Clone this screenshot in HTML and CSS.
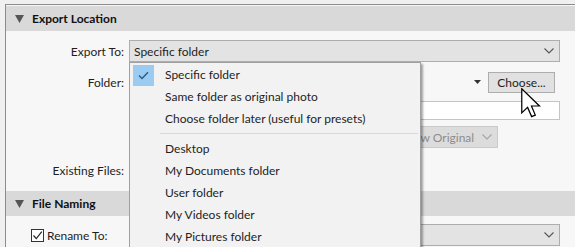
FILE: index.html
```html
<!DOCTYPE html>
<html lang="en">
<head>
    <meta charset="UTF-8">
    <title>Export Location</title>
    <link rel="stylesheet" href="styles.css">
</head>
<body>
    <div class="dialog">
        <div class="panel">
            <div class="section-head">
                <svg class="tri" width="9" height="8" viewBox="0 0 9 8"><path d="M0 0H9L4.5 8Z" fill="#555"/></svg>
                Export Location
            </div>
            <div class="section-body">
                <div class="row row-first">
                    <span class="lbl">Export To:</span>
                    <div class="select">
                        <span>Specific folder</span>
                        <svg class="chev" width="10" height="6" viewBox="0 0 10 6"><path d="M0.5 0.5L5 5L9.5 0.5" fill="none" stroke="#555" stroke-width="1.1"/></svg>
                    </div>
                </div>
                <div class="row row-folder">
                    <span class="lbl">Folder:</span>
                    <div class="folder-path"></div>
                    <svg class="small-tri" width="7" height="4" viewBox="0 0 7 4"><path d="M0 0H7L3.5 4Z" fill="#333"/></svg>
                    <button class="btn">Choose...</button>
                </div>
                <div class="row row-sub">
                    <span class="lbl"></span>
                    <div class="field"></div>
                </div>
                <div class="row row-stack">
                    <span class="lbl"></span>
                    <div class="spacer"></div>
                    <div class="select disabled">
                        <span>Below Original</span>
                        <svg class="chev" width="10" height="6" viewBox="0 0 10 6"><path d="M0.5 0.5L5 5L9.5 0.5" fill="none" stroke="#a5a5a5" stroke-width="1.1"/></svg>
                    </div>
                </div>
                <div class="row row-existing">
                    <span class="lbl">Existing Files:</span>
                </div>
            </div>
            <div class="section-head head-naming">
                <svg class="tri" width="9" height="8" viewBox="0 0 9 8"><path d="M0 0H9L4.5 8Z" fill="#555"/></svg>
                File Naming
            </div>
            <div class="section-body">
                <div class="row row-rename">
                    <span class="check-lbl">
                        <span class="checkbox">
                            <svg width="11" height="11" viewBox="0 0 11 11"><path d="M1.5 5.5L4.3 8.6L9.8 1.6" fill="none" stroke="#222" stroke-width="1.2"/></svg>
                        </span>
                        Rename To:
                    </span>
                    <div class="select">
                        <span></span>
                        <svg class="chev" width="10" height="6" viewBox="0 0 10 6"><path d="M0.5 0.5L5 5L9.5 0.5" fill="none" stroke="#555" stroke-width="1.1"/></svg>
                    </div>
                </div>
            </div>
        </div>

        <!-- open dropdown of Export To -->
        <ul class="menu">
            <li class="checked">
                <span class="tick">
                    <svg width="11" height="9" viewBox="0 0 11 9"><path d="M1 4.6L4 7.6L10 1.2" fill="none" stroke="#2b5a8a" stroke-width="1.4"/></svg>
                </span>
                Specific folder
            </li>
            <li>Same folder as original photo</li>
            <li>Choose folder later (useful for presets)</li>
            <li class="sep"></li>
            <li>Desktop</li>
            <li>My Documents folder</li>
            <li>User folder</li>
            <li>My Videos folder</li>
            <li>My Pictures folder</li>
        </ul>

        <svg class="cursor" width="20" height="30" viewBox="0 0 13 19.5">
            <path d="M0.5 0.5V16.2L4.3 12.6L6.9 18.6L9.3 17.6L6.8 11.7H12Z" fill="#fff" stroke="#000" stroke-width="0.8" stroke-linejoin="miter"/>
        </svg>
    </div>
</body>
</html>
```

FILE: styles.css
```css
body {
    margin: 0;
    background-color: #f0f0f0;
    font-family: Lato, "Noto Sans", sans-serif;
    font-size: 12px;
    color: #1e1e1e;
}

.dialog {
    position: relative;
    width: 575px;
    height: 247px;
    overflow: hidden;
}

.panel {
    margin: 4px 0 0 5px;
    height: 260px;
    border-top: 1px solid #8c8c8c;
    border-left: 1px solid #8c8c8c;
    background-color: #f7f7f7;
}

.section-head {
    display: flex;
    align-items: center;
    height: 25px;
    margin-top: 1px;
    padding-left: 9px;
    background-color: #d9d9d9;
    font-weight: bold;
    color: #111;
}

.tri {
    margin-right: 8px;
}

.head-naming {
    margin-top: 10px;
}

.row {
    display: flex;
    align-items: center;
    height: 22px;
    padding-right: 15px;
}

.lbl {
    width: 118px;
    margin-right: 5px;
    text-align: right;
    flex-shrink: 0;
}

.row-first { margin-top: 9px; }
.row-folder { margin-top: 9px; }
.row-sub { margin-top: 6px; }
.row-stack { margin-top: 5px; }
.row-existing { margin-top: 11px; }
.row-rename { margin-top: 8px; }

.select {
    flex: 1;
    display: flex;
    align-items: center;
    justify-content: space-between;
    height: 20px;
    padding: 0 4px;
    background-color: #e3e3e3;
    border: 1px solid #adadad;
}

.chev {
    margin-right: 1px;
}

.spacer {
    flex: 1;
}

.row-stack .select {
    flex: none;
    width: 96px;
    margin-right: 62px;
}

.select.disabled {
    background-color: #dcdcdc;
    border-color: #cacaca;
    color: #8c8c8c;
}

.folder-path {
    flex: 1;
}

.small-tri {
    margin: 0 7px 0 0;
}

.btn {
    width: 67px;
    height: 21px;
    margin-right: 5px;
    padding: 0;
    font-family: inherit;
    font-size: 12px;
    color: #1e1e1e;
    background-color: #e1e1e1;
    border: 1px solid #adadad;
}

.field {
    flex: 1;
    height: 17px;
    background-color: #fff;
    border: 1px solid #c4c4c4;
}

.check-lbl {
    display: flex;
    align-items: center;
    width: 118px;
    margin-right: 5px;
    padding-left: 25px;
    box-sizing: border-box;
}

.checkbox {
    display: flex;
    align-items: center;
    justify-content: center;
    width: 11px;
    height: 11px;
    margin-right: 3px;
    background-color: #fff;
    border: 1px solid #333;
}

.menu {
    position: absolute;
    left: 129px;
    top: 62px;
    width: 290px;
    height: 200px;
    margin: 0;
    padding: 1px 0 0;
    list-style: none;
    background-color: #f2f2f2;
    border: 1px solid #a0a0a0;
    box-shadow: 2px 2px 2px rgba(0, 0, 0, 0.35);
}

.menu li {
    position: relative;
    height: 22px;
    line-height: 22px;
    padding-left: 35px;
}

.menu li.sep {
    height: 8px;
    margin-left: 30px;
    padding: 0;
    background: linear-gradient(#d7d7d7, #d7d7d7) no-repeat 0 3px / 100% 1px;
    margin-right: 2px;
}

.tick {
    position: absolute;
    left: 3px;
    top: 1px;
    width: 21px;
    height: 21px;
    display: flex;
    align-items: center;
    justify-content: center;
    background-color: #9ccbf2;
}

.cursor {
    position: absolute;
    left: 521px;
    top: 88px;
}
```
